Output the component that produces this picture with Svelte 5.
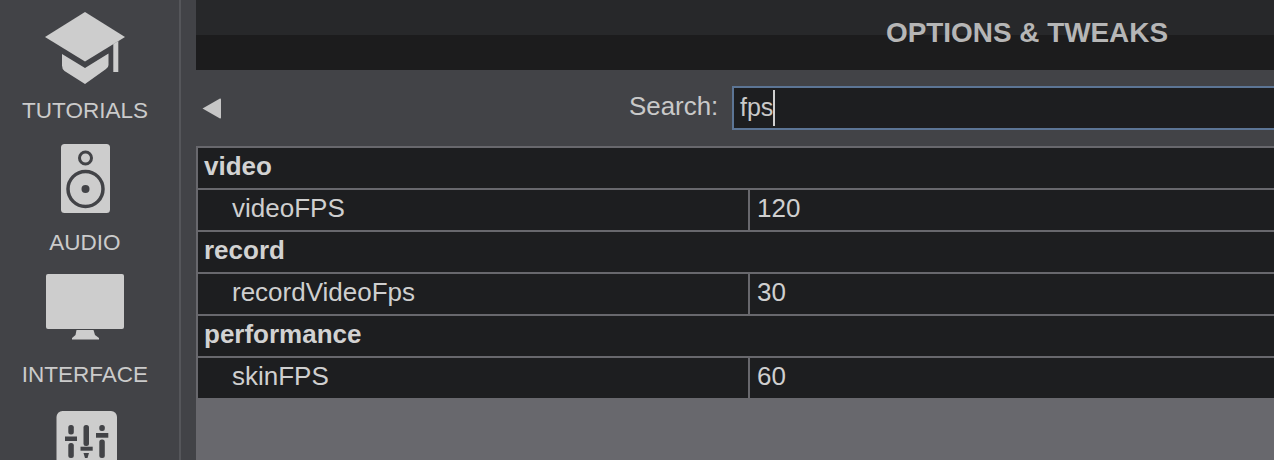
<script>
  const sections = [
    { name: 'video', key: 'videoFPS', value: '120' },
    { name: 'record', key: 'recordVideoFps', value: '30' },
    { name: 'performance', key: 'skinFPS', value: '60' }
  ];
</script>

<div class="page">
  <nav class="sidebar">
    <div class="item">
      <svg viewBox="35 6 100 90" aria-hidden="true">
        <path class="ic" d="M85 12 L125 37 L85 61.5 L45 37 Z" />
        <path class="ic" d="M62 54 L85 68 L108.500 53.500 V65 Q108.500 67.500 106 69 L85 84 L64.500 71 Q62 69 62 65.500 Z" />
        <path class="ic" d="M113.300 44 L118.300 41 V72 H113.300 Z" />
      </svg>
      <span>TUTORIALS</span>
    </div>
    <div class="item">
      <svg viewBox="35 138 100 90" aria-hidden="true">
        <rect class="ic" x="61" y="144" width="49" height="69" rx="3.5" />
        <circle class="cut" cx="85.5" cy="158" r="6" stroke-width="3" />
        <circle class="cut" cx="85.5" cy="189" r="17.5" stroke-width="3.500" />
        <circle class="dot" cx="85.5" cy="189" r="4" />
      </svg>
      <span>AUDIO</span>
    </div>
    <div class="item">
      <svg viewBox="35 270 100 90" aria-hidden="true">
        <rect class="ic" x="46" y="274" width="78" height="55" rx="2" />
        <path class="ic" d="M76.500 330 H93.500 L95 335 L99 338 V339.500 H72 V338 L75.500 335 Z" />
      </svg>
      <span>INTERFACE</span>
    </div>
    <div class="item">
      <svg viewBox="35 402 100 90" aria-hidden="true">
        <rect class="ic" x="56.500" y="411" width="60.500" height="70" rx="6" />
        <g class="bars">
          <rect x="68.300" y="425" width="5.500" height="9.500" rx="2.500" />
          <rect x="68.300" y="443" width="5.500" height="15" rx="2.500" />
          <rect x="83.500" y="425" width="5.500" height="21" rx="2.500" />
          <path d="M83.500 453 H89 L87.500 458 H85 Z" />
          <rect x="99.300" y="425" width="5.500" height="6" rx="2.500" />
          <rect x="99.300" y="439.500" width="5.500" height="18.500" rx="2.500" />
          <rect x="65" y="436.500" width="12" height="4.500" />
          <rect x="80.500" y="446.700" width="12.200" height="4" />
          <rect x="96" y="433" width="12.300" height="4.700" />
        </g>
      </svg>
    </div>
  </nav>

  <main class="main">
    <header class="title">OPTIONS &amp; TWEAKS</header>
    <div class="toolbar">
      <svg class="back" viewBox="0 0 19 21" aria-hidden="true">
        <path d="M0.500 10.500 L18 0.500 Q19 0.300 19 1.500 V19.500 Q19 20.800 18 20.500 Z" />
      </svg>
      <label class="search-label" for="q">Search:</label>
      <div class="search" id="q"><span>fps</span><i class="caret"></i></div>
    </div>
    <div class="table">
      {#each sections as s}
        <div class="row head">{s.name}</div>
        <div class="row pair">
          <div class="key">{s.key}</div>
          <div class="val">{s.value}</div>
        </div>
      {/each}
    </div>
  </main>
</div>

<style>
  :global(body) {
    margin: 0;
    overflow: hidden;
    background: #424347;
  }
  .page {
    display: flex;
    width: 1274px;
    height: 460px;
    overflow: hidden;
    font-family: "Liberation Sans", Arial, sans-serif;
    color: #cfcfcf;
    background: #424347;
  }
  .sidebar {
    flex: none;
    box-sizing: border-box;
    width: 181px;
    margin-right: 15px;
    padding-top: 6px;
    border-right: 2px solid #55565a;
  }
  .item {
    width: 170px;
    height: 132px;
    display: flex;
    flex-direction: column;
    align-items: center;
  }
  .item svg {
    display: block;
    flex: none;
    width: 100px;
    height: 90px;
  }
  .item span {
    font-size: 22.500px;
    line-height: 30px;
    color: #cbcbcb;
    white-space: nowrap;
  }
  .ic { fill: #cdcdcd; }
  .cut { fill: none; stroke: #424347; }
  .dot { fill: #424347; }
  .bars { fill: #424347; }

  .main {
    flex: none;
    width: 1662px;
    display: flex;
    flex-direction: column;
    height: 460px;
    background: #68686d;
  }
  .title {
    height: 70px;
    box-sizing: border-box;
    padding-bottom: 4px;
    display: flex;
    align-items: center;
    justify-content: center;
    font-size: 27.900px;
    font-weight: 700;
    color: #b6b6b6;
    background: linear-gradient(#27282a 0 35px, #1c1c1d 35px);
  }
  .toolbar {
    height: 76px;
    box-sizing: border-box;
    padding: 16px 0 16px 6px;
    display: flex;
    align-items: flex-start;
    background: #424347;
  }
  .back {
    flex: none;
    width: 19px;
    height: 21px;
    margin-top: 12px;
    fill: #c6c6c6;
  }
  .search-label {
    flex: none;
    width: 89px;
    margin-left: 408px;
    margin-right: 14px;
    font-size: 25.900px;
    line-height: 40px;
    white-space: nowrap;
    color: #c9c9c9;
  }
  .search {
    flex: none;
    box-sizing: border-box;
    width: 693px;
    height: 44px;
    padding-left: 6px;
    padding-bottom: 2px;
    display: flex;
    align-items: center;
    font-size: 25px;
    color: #c9c9c9;
    background: #1d1e20;
    border: 2px solid #5c7595;
  }
  .caret {
    width: 2px;
    height: 36px;
    margin-top: 2px;
    background: #d0d0d0;
  }
  .table {
    padding: 2px 0 0 2px;
    display: flex;
    flex-direction: column;
    gap: 2px;
  }
  .row {
    height: 40px;
    background: #1d1e20;
    font-size: 26px;
    line-height: 36px;
    white-space: nowrap;
  }
  .head {
    padding-left: 6px;
    font-weight: 700;
    color: #d2d2d2;
  }
  .pair {
    display: grid;
    grid-template-columns: 550px 1fr;
    background: #68686d;
    column-gap: 2px;
  }
  .key {
    padding-left: 34px;
    background: #1d1e20;
  }
  .val {
    padding-left: 7px;
    background: #1d1e20;
  }
</style>
